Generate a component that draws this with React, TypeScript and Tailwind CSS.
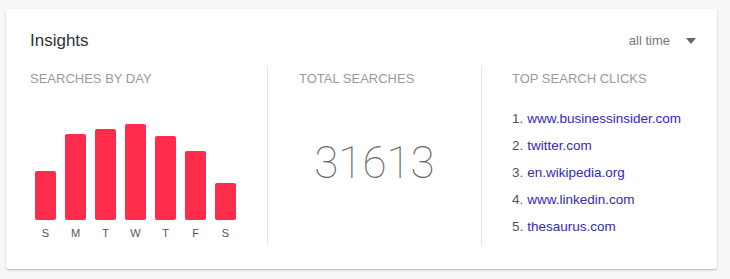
const days = [
  { d: "S", h: 49 },
  { d: "M", h: 86 },
  { d: "T", h: 91 },
  { d: "W", h: 96 },
  { d: "T", h: 84 },
  { d: "F", h: 69 },
  { d: "S", h: 37 },
];

const clicks = [
  "www.businessinsider.com",
  "twitter.com",
  "en.wikipedia.org",
  "www.linkedin.com",
  "thesaurus.com",
];

function ColumnTitle({ children }: { children: string }) {
  return (
    <div className="text-[13px] leading-4 text-[#9a9a9a] uppercase">{children}</div>
  );
}

export default function App() {
  return (
    <div
      className="h-[279px] w-[730px] bg-[#f7f7f7] pt-[9px] pl-[6px]"
      style={{ fontFamily: '"Liberation Sans", Arial, sans-serif' }}
    >
      <div className="h-[260px] w-[711px] rounded-[2px] bg-white pt-[20px] pl-6 pb-6 shadow-[0_1px_2px_rgba(0,0,0,0.25)]">
        <div className="flex items-center justify-between pr-[21px]">
          <h2 className="text-[17px] leading-6 text-[#333]">Insights</h2>
          <button className="flex items-center gap-[16px] text-[13px] text-[#777]">
            all time
            <svg width="10" height="6" viewBox="0 0 10 6">
              <path d="M0 0h10L5 6z" fill="#666" />
            </svg>
          </button>
        </div>

        <div className="mt-[13px] flex h-[179px]">
          <div className="w-[238px] border-r border-[#e6e6e6] pt-[5px]">
            <ColumnTitle>Searches by day</ColumnTitle>
            <div className="flex h-[133px] items-end gap-[9px] pl-[5px]">
              {days.map((x, i) => (
                <div
                  key={i}
                  className="w-[21px] rounded-[2px] bg-[#ff2d4b]"
                  style={{ height: x.h }}
                />
              ))}
            </div>
            <div className="mt-[6px] flex gap-[9px] pl-[5px]">
              {days.map((x, i) => (
                <div key={i} className="w-[21px] text-center text-[11px] leading-[14px] text-[#555]">
                  {x.d}
                </div>
              ))}
            </div>
          </div>

          <div className="flex w-[214px] flex-col border-r border-[#e6e6e6] pt-[5px] pl-[31px]">
            <ColumnTitle>Total searches</ColumnTitle>
            <div
              className="-ml-[31px] mt-[50px] text-center text-[44px] leading-[52px] font-thin text-[#666]"
              style={{ fontFamily: 'Roboto, "Liberation Sans", sans-serif' }}
            >
              31613
            </div>
          </div>

          <div className="pt-[5px] pl-[30px]">
            <ColumnTitle>Top search clicks</ColumnTitle>
            <ol className="mt-[18px]">
              {clicks.map((c, i) => (
                <li key={c} className="text-[13.5px] leading-[27px] text-[#555]">
                  <span className="mr-[4px]">{i + 1}.</span>
                  <a href="#" className="text-[#3129b8]">
                    {c}
                  </a>
                </li>
              ))}
            </ol>
          </div>
        </div>
      </div>
    </div>
  );
}
